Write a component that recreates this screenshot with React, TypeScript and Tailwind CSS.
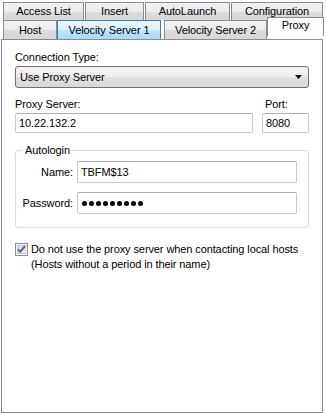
import React from "react";

type TabProps = { label: string; w: string; tone?: "normal" | "hot" | "active"; className?: string };

const Tab = ({ label, w, tone = "normal", className = "" }: TabProps) => {
  const tones = {
    normal: "border-[#898c95] bg-[linear-gradient(to_bottom,#f3f3f3_0%,#ebebeb_50%,#dddddd_51%,#d6d6d6_100%)]",
    hot: "border-[#3c7fb1] bg-[linear-gradient(to_bottom,#eaf6fd_0%,#d9f0fc_50%,#bee6fd_51%,#a7d9f5_100%)]",
    active: "relative z-10 -mt-[3px] h-[23px] border-[#898c95] border-b-0 bg-white pb-[4px]",
  };
  return (
    <div
      className={`flex h-full items-center justify-center border border-b-0 leading-[13px] ${w} ${tones[tone]} ${className}`}
    >
      {label}
    </div>
  );
};

const Field = ({ value, className = "" }: { value: React.ReactNode; className?: string }) => (
  <div
    className={`flex items-center rounded-[2px] border border-[#c3c6cc] border-t-[#abadb3] bg-white pl-[3px] leading-[13px] ${className}`}
  >
    {value}
  </div>
);

const PasswordDots = ({ count }: { count: number }) => (
  <div className="flex items-center gap-[2px]">
    {Array.from({ length: count }).map((_, i) => (
      <span key={i} className="block h-[5px] w-[5px] rounded-full bg-black" />
    ))}
  </div>
);

export default function App() {
  return (
    <div className="h-[414px] w-[326px] overflow-hidden bg-white font-['Liberation_Sans',Arial,sans-serif] text-[11px] tracking-[-0.1px] text-black">
      {/* tab strip, back row */}
      <div className="flex h-[18px] pl-[3px] mt-[2px]">
        <Tab label="Access List" w="w-[81px]" />
        <Tab label="Insert" w="w-[59px]" className="ml-[1px]" />
        <Tab label="AutoLaunch" w="w-[85px]" className="ml-[1px]" />
        <Tab label="Configuration" w="w-[92px]" className="ml-[1px]" />
      </div>

      {/* tab strip, front row */}
      <div className="flex h-[19px] items-start pl-[3px]">
        <Tab label="Host" w="w-[54px] border-t" />
        <Tab label="Velocity Server 1" w="w-[104px] border-t" tone="hot" />
        <Tab label="Velocity Server 2" w="w-[103px] border-t" className="ml-[3px]" />
        <Tab label="Proxy" w="w-[57px] border-t" tone="active" />
      </div>

      {/* page */}
      <div className="ml-[1px] h-[374px] w-[322px] border border-[#898c95] bg-white px-[13px] pt-[11px]">
        <div className="leading-[13px]">Connection Type:</div>
        <div className="mt-[2px] flex h-[22px] items-center justify-between rounded-[3px] border border-[#707070] bg-[linear-gradient(to_bottom,#f4f4f4_0%,#ececec_50%,#e0e0e0_51%,#d8d8d8_100%)] pl-[4px] pr-[6px]">
          <span className="leading-[13px]">Use Proxy Server</span>
          <svg width="7" height="4" viewBox="0 0 7 4">
            <path d="M0 0H7L3.5 4Z" fill="#000" />
          </svg>
        </div>

        <div className="mt-[10px] flex">
          <div className="w-[247px]">
            <div className="leading-[13px]">Proxy Server:</div>
          </div>
          <div className="ml-[3px] leading-[13px]">Port:</div>
        </div>
        <div className="mt-[2px] flex">
          <Field value="10.22.132.2" className="h-[20px] w-[238px]" />
          <Field value="8080" className="ml-[9px] h-[20px] w-[47px]" />
        </div>

        <fieldset className="mt-[11px] h-[84px] rounded-[3px] border border-[#d5dfe5] pr-[11px]">
          <legend className="ml-[7px] px-[2px] leading-[13px]">Autologin</legend>
          <div className="mt-[4px] flex items-center">
            <div className="w-[57px] text-right leading-[13px]">Name:</div>
            <Field value="TBFM$13" className="ml-[4px] h-[22px] flex-1" />
          </div>
          <div className="mt-[9px] flex items-center">
            <div className="w-[57px] text-right leading-[13px]">Password:</div>
            <Field value={<PasswordDots count={9} />} className="ml-[4px] h-[22px] flex-1 pl-[4px]" />
          </div>
        </fieldset>

        <div className="mt-[14px] flex items-start">
          <svg width="13" height="13" viewBox="0 0 13 13" className="mt-[1px] shrink-0">
            <defs>
              <linearGradient id="cb" x1="0" y1="0" x2="1" y2="1">
                <stop offset="0" stopColor="#cbcfd5" />
                <stop offset="1" stopColor="#f6f6f6" />
              </linearGradient>
            </defs>
            <rect x="0.5" y="0.5" width="12" height="12" fill="#f4f4f4" stroke="#8e8f8f" />
            <rect x="2.5" y="2.5" width="8" height="8" fill="url(#cb)" stroke="#c7cbd2" />
            <path d="M3 6.3L5.2 8.8L10 3.2" fill="none" stroke="#4a5f97" strokeWidth="1.8" />
          </svg>
          <div className="ml-[3px] leading-[15px]">
            Do not use the proxy server when contacting local hosts
            <br />
            (Hosts without a period in their name)
          </div>
        </div>
      </div>
    </div>
  );
}
